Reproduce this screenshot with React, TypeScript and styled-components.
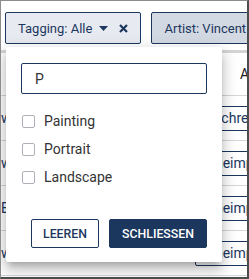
import React from "react";
import styled, { createGlobalStyle } from "styled-components";

const navy = "#1c375e";

const Global = createGlobalStyle`
  html, body { margin: 0; padding: 0; background: #fff; }
  body { font-family: Roboto, "Liberation Sans", Arial, sans-serif; }
  * { box-sizing: border-box; }
`;

const Frame = styled.div`
  position: relative;
  width: 249px;
  height: 279px;
  overflow: hidden;
  background: #fff;
  border-top: 1px solid #8c8c8c;
  border-left: 1px solid #8c8c8c;
  border-right: 2px solid #4d4d4d;
  border-bottom: 2px solid #4d4d4d;
`;

const ChipBar = styled.div`
  display: flex;
  gap: 10px;
  padding: 11px 0 0 4px;
  white-space: nowrap;
`;

const Chip = styled.div<{ $active?: boolean }>`
  flex: none;
  display: flex;
  align-items: center;
  height: 32px;
  padding: 0 12px;
  border: 1px solid ${navy};
  border-radius: 2px;
  background: ${(p) => (p.$active ? "#e7ebf1" : "#d3d9e2")};
  color: ${navy};
  font-size: 13px;
`;

const ChipLabel = styled.span`
  margin-right: 7px;
`;

const IconSlot = styled.span<{ $gap?: number }>`
  display: inline-flex;
  margin-left: ${(p) => p.$gap ?? 0}px;
`;

const Table = styled.div`
  margin-top: 6px;
  border-top: 3px solid #d4d4d4;
`;

const HeaderRow = styled.div`
  display: grid;
  grid-template-columns: 194px 1fr;
  height: 43px;
  align-items: center;
  font-size: 14px;
  color: #222;
  border-bottom: 1px solid #d6d6d6;
`;

const HeaderCell = styled.div<{ $pad?: number }>`
  padding-left: ${(p) => p.$pad ?? 0}px;
  white-space: nowrap;
  overflow: hidden;
`;

const Row = styled.div`
  display: grid;
  grid-template-columns: 194px 1fr;
  height: 45px;
  align-items: center;
  border-bottom: 1px solid #d6d6d6;
  font-size: 14px;
  color: ${navy};
`;

const Cell = styled.div`
  white-space: nowrap;
  overflow: hidden;
`;

const CellBox = styled.div`
  height: 25px;
  width: 90px;
  display: flex;
  align-items: center;
  padding-left: 2px;
  border: 1px solid ${navy};
  border-radius: 2px;
  white-space: nowrap;
  color: ${navy};
`;

const Popup = styled.div`
  position: absolute;
  left: 5px;
  top: 46px;
  width: 216px;
  background: #fff;
  border-radius: 2px;
  box-shadow: 0 5px 6px -3px rgba(0, 0, 0, 0.2), 0 9px 12px 1px rgba(0, 0, 0, 0.14),
    0 3px 16px 2px rgba(0, 0, 0, 0.12);
  padding: 16px 15px 14px 15px;
  display: flex;
  flex-direction: column;
`;

const SearchInput = styled.div`
  height: 31px;
  border: 1px solid ${navy};
  border-radius: 2px;
  display: flex;
  align-items: center;
  padding-left: 13px;
  font-size: 14px;
  color: #333;
`;

const OptionList = styled.div`
  display: flex;
  flex-direction: column;
  margin-top: 13px;
`;

const Option = styled.label`
  display: flex;
  align-items: center;
  height: 28px;
  font-size: 14px;
  color: #333;
`;

const Box = styled.span`
  width: 13px;
  height: 13px;
  margin-left: 1px;
  border: 1px solid #aeb2b8;
  border-radius: 2px;
  background: #fff;
  margin-right: 9px;
`;

const Actions = styled.div`
  display: flex;
  justify-content: flex-end;
  gap: 10px;
  margin-top: 28px;
`;

const Button = styled.button<{ $primary?: boolean }>`
  height: 29px;
  width: ${(p) => (p.$primary ? 98 : 68)}px;
  padding: 0;
  border: 1px solid ${navy};
  border-radius: 2px;
  background: ${(p) => (p.$primary ? navy : "#fff")};
  color: ${(p) => (p.$primary ? "#fff" : navy)};
  font-family: Roboto, "Liberation Sans", Arial, sans-serif;
  font-size: 12.3px;
  font-weight: 500;
  text-align: center;
  text-transform: uppercase;
`;

const Caret = () => (
  <svg width="9" height="5" viewBox="0 0 9 5">
    <path d="M0 0 L9 0 L4.5 5 Z" fill={navy} />
  </svg>
);

const Close = () => (
  <svg width="9" height="9" viewBox="0 0 9 9">
    <path d="M1 1 L8 8 M8 1 L1 8" stroke={navy} strokeWidth="2.2" strokeLinecap="butt" />
  </svg>
);

const rows = [
  { left: "w", right: "Beschreibung" },
  { left: "w", right: "Geheimprojekt" },
  { left: "E", right: "Geheimprojekt" },
  { left: "w", right: "Geheimprojekt" },
];

export default function App() {
  return (
    <>
      <Global />
      <Frame>
        <ChipBar>
          <Chip $active>
            <ChipLabel>Tagging: Alle</ChipLabel>
            <IconSlot><Caret /></IconSlot>
            <IconSlot $gap={11}><Close /></IconSlot>
          </Chip>
          <Chip>
            <ChipLabel>Artist: Vincent van Gogh</ChipLabel>
          </Chip>
        </ChipBar>
        <Table>
          <HeaderRow>
            <HeaderCell />
            <HeaderCell $pad={45}>Aktion</HeaderCell>
          </HeaderRow>
          {rows.map((r, i) => (
            <Row key={i}>
              <Cell>{r.left}</Cell>
              <Cell>
                <CellBox>{r.right}</CellBox>
              </Cell>
            </Row>
          ))}
        </Table>
        <Popup>
          <SearchInput>P</SearchInput>
          <OptionList>
            {["Painting", "Portrait", "Landscape"].map((o) => (
              <Option key={o}>
                <Box />
                {o}
              </Option>
            ))}
          </OptionList>
          <Actions>
            <Button>Leeren</Button>
            <Button $primary>Schliessen</Button>
          </Actions>
        </Popup>
      </Frame>
    </>
  );
}
